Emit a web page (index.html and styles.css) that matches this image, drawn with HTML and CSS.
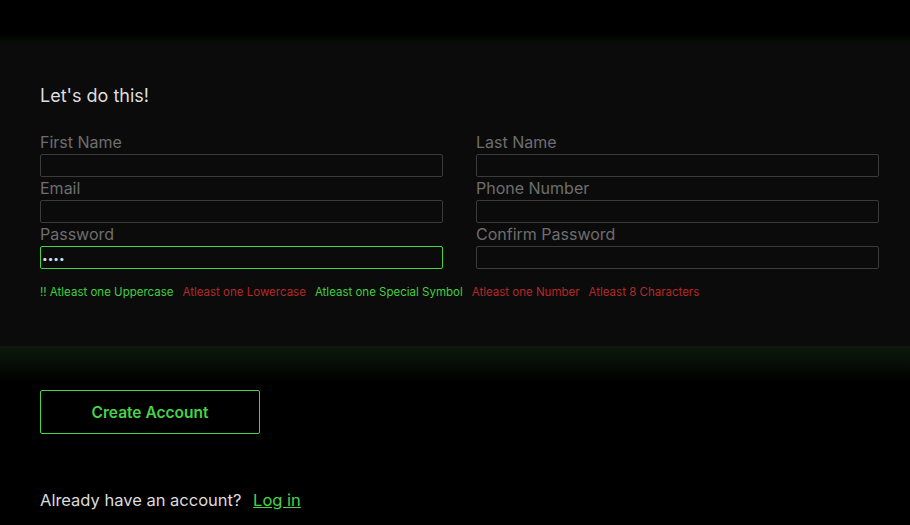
FILE: index.html
```html
<!DOCTYPE html>
<html>
<head>
<meta charset="utf-8">
<link rel="stylesheet" href="styles.css">
</head>
<body>
<div class="top"></div>
<section class="panel">
  <h1 class="title">Let's do this!</h1>
  <div class="grid">
    <div class="col">
      <label class="label">First Name</label>
      <div class="input"></div>
      <label class="label">Email</label>
      <div class="input"></div>
      <label class="label">Password</label>
      <div class="input active"><span class="dots">••••</span></div>
    </div>
    <div class="col">
      <label class="label">Last Name</label>
      <div class="input"></div>
      <label class="label">Phone Number</label>
      <div class="input"></div>
      <label class="label">Confirm Password</label>
      <div class="input"></div>
    </div>
  </div>
  <div class="rules">
    <span class="ok">!! Atleast one Uppercase</span>
    <span class="bad">Atleast one Lowercase</span>
    <span class="ok">Atleast one Special Symbol</span>
    <span class="bad">Atleast one Number</span>
    <span class="bad">Atleast 8 Characters</span>
  </div>
</section>
<div class="glow"></div>
<div class="actions">
  <button class="btn">Create Account</button>
  <p class="login">Already have an account? <a class="link">Log in</a></p>
</div>
</body>
</html>
```
FILE: styles.css
```css
html, body { margin: 0; padding: 0; background: #000; }
body {
  font-family: Inter, "Open Sans", sans-serif;
  width: 910px; height: 525px; overflow: hidden;
}
.top {
  height: 46px;
  background: linear-gradient(to bottom, #000 0px, #000 34px, #050a05 40px, #0b0b0b 46px);
}
.panel {
  background: #0b0b0b;
  padding: 38px 31px 0 40px;
  height: 300px;
  box-sizing: border-box;
}
.title {
  margin: 0;
  font-weight: 400;
  font-size: 18px;
  line-height: 24px;
  color: #dedede;
}
.grid {
  margin-top: 23px;
  display: grid;
  grid-template-columns: 403px 403px;
  column-gap: 33px;
}
.col { display: flex; flex-direction: column; }
.label {
  font-size: 16px;
  line-height: 23px;
  color: #6e6e6e;
}
.input {
  height: 23px;
  box-sizing: border-box;
  border: 1px solid #3b3b3b;
  border-radius: 2px;
  background: #0b0b0b;
  display: flex; align-items: center;
}
.input.active { border-color: #45d445; }
.dots { color: #cfe3f5; font-size: 10px; letter-spacing: 0; padding-left: 1px; }
.rules {
  margin-top: 16px;
  font-size: 11.5px;
  line-height: 14px;
  display: flex;
  gap: 9px;
}
.ok { color: #3fcf3f; }
.bad { color: #b52828; }
.glow {
  height: 35px;
  background: linear-gradient(to bottom, #0d1a0d 0px, #060c06 20px, #000 35px);
}
.actions { padding: 9px 40px 0 40px; }
.btn {
  width: 220px; height: 44px;
  background: #000;
  border: 1px solid #45d445;
  border-radius: 2px;
  color: #45d445;
  font-family: inherit;
  font-weight: 600;
  font-size: 15.5px;
  display: block;
}
.login {
  margin: 56px 0 0 0;
  font-size: 16.5px;
  line-height: 20px;
  color: #dcdcdc;
}
.link {
  color: #45d445;
  text-decoration: underline;
  margin-left: 7px;
}
```
